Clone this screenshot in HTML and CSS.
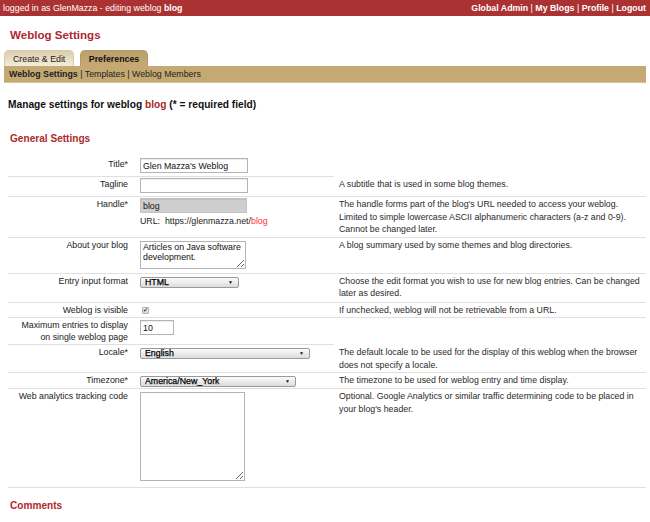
FILE: index.html
```html
<!DOCTYPE html>
<html>
<head>
<meta charset="utf-8">
<link rel="stylesheet" href="styles.css">
</head>
<body>
<div class="topbar">
  <span>logged in as GlenMazza - editing weblog <b>blog</b></span>
  <span class="toplinks"><a href="#">Global Admin</a> | <a href="#">My Blogs</a> | <a href="#">Profile</a> | <a href="#">Logout</a></span>
</div>
<h1 class="title">Weblog Settings</h1>
<div class="tabs">
  <span class="tab">Create &amp; Edit</span>
  <span class="tab active">Preferences</span>
</div>
<div class="subbar"><b>Weblog Settings</b> | Templates | Weblog Members</div>

<h2 class="manage">Manage settings for weblog <span class="red">blog</span> (* = required field)</h2>
<h3 class="section">General Settings</h3>

<table class="form">
  <tr>
    <td class="lbl">Title*</td>
    <td class="fld"><input class="txt" type="text" value="Glen Mazza's Weblog"></td>
    <td class="help empty"></td>
  </tr>
  <tr>
    <td class="lbl">Tagline</td>
    <td class="fld"><input class="txt" type="text" value=""></td>
    <td class="help">A subtitle that is used in some blog themes.</td>
  </tr>
  <tr>
    <td class="lbl">Handle*</td>
    <td class="fld"><input class="txt ro" type="text" value="blog" readonly><div class="url">URL:&nbsp; https://glenmazza.net/<span class="bright">blog</span></div></td>
    <td class="help">The handle forms part of the blog's URL needed to access your weblog. Limited to simple lowercase ASCII alphanumeric characters (a-z and 0-9). Cannot be changed later.</td>
  </tr>
  <tr>
    <td class="lbl">About your blog</td>
    <td class="fld"><textarea class="ta about">Articles on Java software development.</textarea></td>
    <td class="help">A blog summary used by some themes and blog directories.</td>
  </tr>
  <tr class="tall">
    <td class="lbl">Entry input format</td>
    <td class="fld"><span class="selwrap w-format"><select class="sel"><option>HTML</option></select></span></td>
    <td class="help">Choose the edit format you wish to use for new blog entries. Can be changed later as desired.</td>
  </tr>
  <tr>
    <td class="lbl">Weblog is visible</td>
    <td class="fld"><label class="chkwrap"><input class="chk" type="checkbox" checked></label></td>
    <td class="help">If unchecked, weblog will not be retrievable from a URL.</td>
  </tr>
  <tr>
    <td class="lbl">Maximum entries to display on single weblog page</td>
    <td class="fld"><input class="txt num" type="text" value="10"></td>
    <td class="help empty"></td>
  </tr>
  <tr>
    <td class="lbl">Locale*</td>
    <td class="fld"><span class="selwrap w-locale"><select class="sel"><option>English</option></select></span></td>
    <td class="help">The default locale to be used for the display of this weblog when the browser does not specify a locale.</td>
  </tr>
  <tr>
    <td class="lbl">Timezone*</td>
    <td class="fld"><span class="selwrap w-tz"><select class="sel"><option>America/New_York</option></select></span></td>
    <td class="help">The timezone to be used for weblog entry and time display.</td>
  </tr>
  <tr>
    <td class="lbl">Web analytics tracking code</td>
    <td class="fld"><textarea class="ta analytics"></textarea></td>
    <td class="help">Optional. Google Analytics or similar traffic determining code to be placed in your blog's header.</td>
  </tr>
</table>

<h3 class="section comments">Comments</h3>
</body>
</html>
```

FILE: styles.css
```css
body {
  margin: 0;
  font-family: "Liberation Sans", Arial, sans-serif;
  font-size: 8.8px;
  color: #222;
  background: #fff;
}

.topbar {
  height: 16px;
  background: #ab3232;
  color: #fff;
  display: flex;
  justify-content: space-between;
  align-items: center;
  padding: 0 4px 0 3px;
}
.toplinks a {
  color: #fff;
  font-weight: bold;
  text-decoration: none;
}

.title {
  margin: 0;
  padding: 12px 10px 0;
  font-size: 11.6px;
  line-height: 14px;
  color: #ad2a30;
}

.tabs {
  display: flex;
  gap: 6px;
  padding: 8px 4px 0;
}
.tab {
  height: 16px;
  line-height: 17px;
  padding: 0 8px;
  border: 1px solid #d8cba8;
  border-bottom: none;
  border-radius: 5px 5px 0 0;
  background: linear-gradient(#dccdaa, #f3ecdb);
  color: #222;
  box-sizing: border-box;
}
.tab.active {
  font-weight: bold;
  padding: 0 7.5px;
  border-color: #b8996a;
  background: linear-gradient(#baa06c, #c7a972);
  color: #111;
}

.subbar {
  margin: 0 4px;
  height: 17px;
  line-height: 17px;
  padding-left: 5px;
  background: #c5a973;
  border-bottom: 1px solid #d6c29a;
  box-sizing: border-box;
  color: #222;
}

.manage {
  margin: 16px 0 0 8px;
  font-size: 10.2px;
  line-height: 12px;
  color: #111;
}
.red { color: #a8282c; }

.section {
  margin: 22px 0 0 10px;
  font-size: 10.1px;
  line-height: 12px;
  color: #ad2a30;
}

.form {
  margin: 12px 4px 0 8px;
  width: 638px;
  border-collapse: separate;
  border-spacing: 0;
}
.form td {
  vertical-align: top;
  padding: 1px 0 1px 0;
  border-bottom: 1px solid #e0e0e0;
}
.form td.empty { border-bottom: none; }
.form tr.tall td { padding-bottom: 2px; }
.lbl {
  width: 110px;
  padding-left: 10px !important;
  padding-right: 6px !important;
  text-align: right;
  line-height: 12px;
  color: #222;
}
.fld {
  width: 194px;
  padding-left: 6px !important;
  line-height: 12px;
}
.help {
  padding-left: 5px !important;
  line-height: 12.5px;
  color: #2a2a2a;
}

.txt {
  display: block;
  box-sizing: border-box;
  width: 108px;
  height: 15px;
  margin: 0 0 2px;
  padding: 0 2px;
  font: 8.8px "Liberation Sans", Arial, sans-serif;
  color: #111;
  border: 1px solid #b4b4b4;
  border-radius: 0;
  background: #fff;
  box-shadow: inset 0 1px 1px rgba(0,0,0,0.08);
}
.txt.ro {
  width: 107px;
  background: #cfcfcf;
  border-color: #c4c4c4;
}
.txt.num { width: 34px; margin-top: 1px; }
.url { line-height: 12px; }
.bright { color: #f33; }

.ta {
  display: block;
  box-sizing: border-box;
  margin: 2px 0 3px;
  padding: 0 2px;
  font: 8.8px/10px "Liberation Sans", Arial, sans-serif;
  color: #111;
  border: 1px solid #b4b4b4;
  resize: both;
}
.ta.about { width: 106px; height: 28px; }
.ta.analytics { width: 105px; height: 89px; margin-bottom: 5px; }

.selwrap {
  position: relative;
  display: block;
  margin-top: 2px;
  height: 11px;
}
.sel {
  -webkit-appearance: none;
  appearance: none;
  display: block;
  box-sizing: border-box;
  width: 100%;
  height: 11px;
  margin: 0;
  padding: 0 0 0 4px;
  font: 8.8px/9px "Liberation Sans", Arial, sans-serif;
  -webkit-text-stroke: 0.25px #000;
  color: #000;
  border: 1px solid #9a9a9a;
  border-radius: 2px;
  background: linear-gradient(#fbfbfb, #dcdcdc);
}
.selwrap::after {
  content: "\25BC";
  position: absolute;
  right: 6px;
  top: 2px;
  font-size: 5px;
  line-height: 7px;
  color: #111;
  pointer-events: none;
}
.w-format { width: 99px; }
.w-locale { width: 170px; }
.w-tz { width: 156px; }

.chkwrap {
  position: relative;
  display: block;
  width: 7px;
  height: 7px;
  margin: 3px 0 2px 2px;
}
.chk {
  -webkit-appearance: none;
  appearance: none;
  display: block;
  box-sizing: border-box;
  width: 7px;
  height: 7px;
  margin: 0;
  border: 1px solid #b0b0b0;
  border-radius: 1px;
  background: linear-gradient(#f4f4f4, #dadada);
}
.chkwrap::after {
  content: "\2714";
  position: absolute;
  left: 1px;
  top: -1px;
  font-size: 6px;
  line-height: 8px;
  color: #333;
  pointer-events: none;
}

.comments { margin-top: 12px; }
```
